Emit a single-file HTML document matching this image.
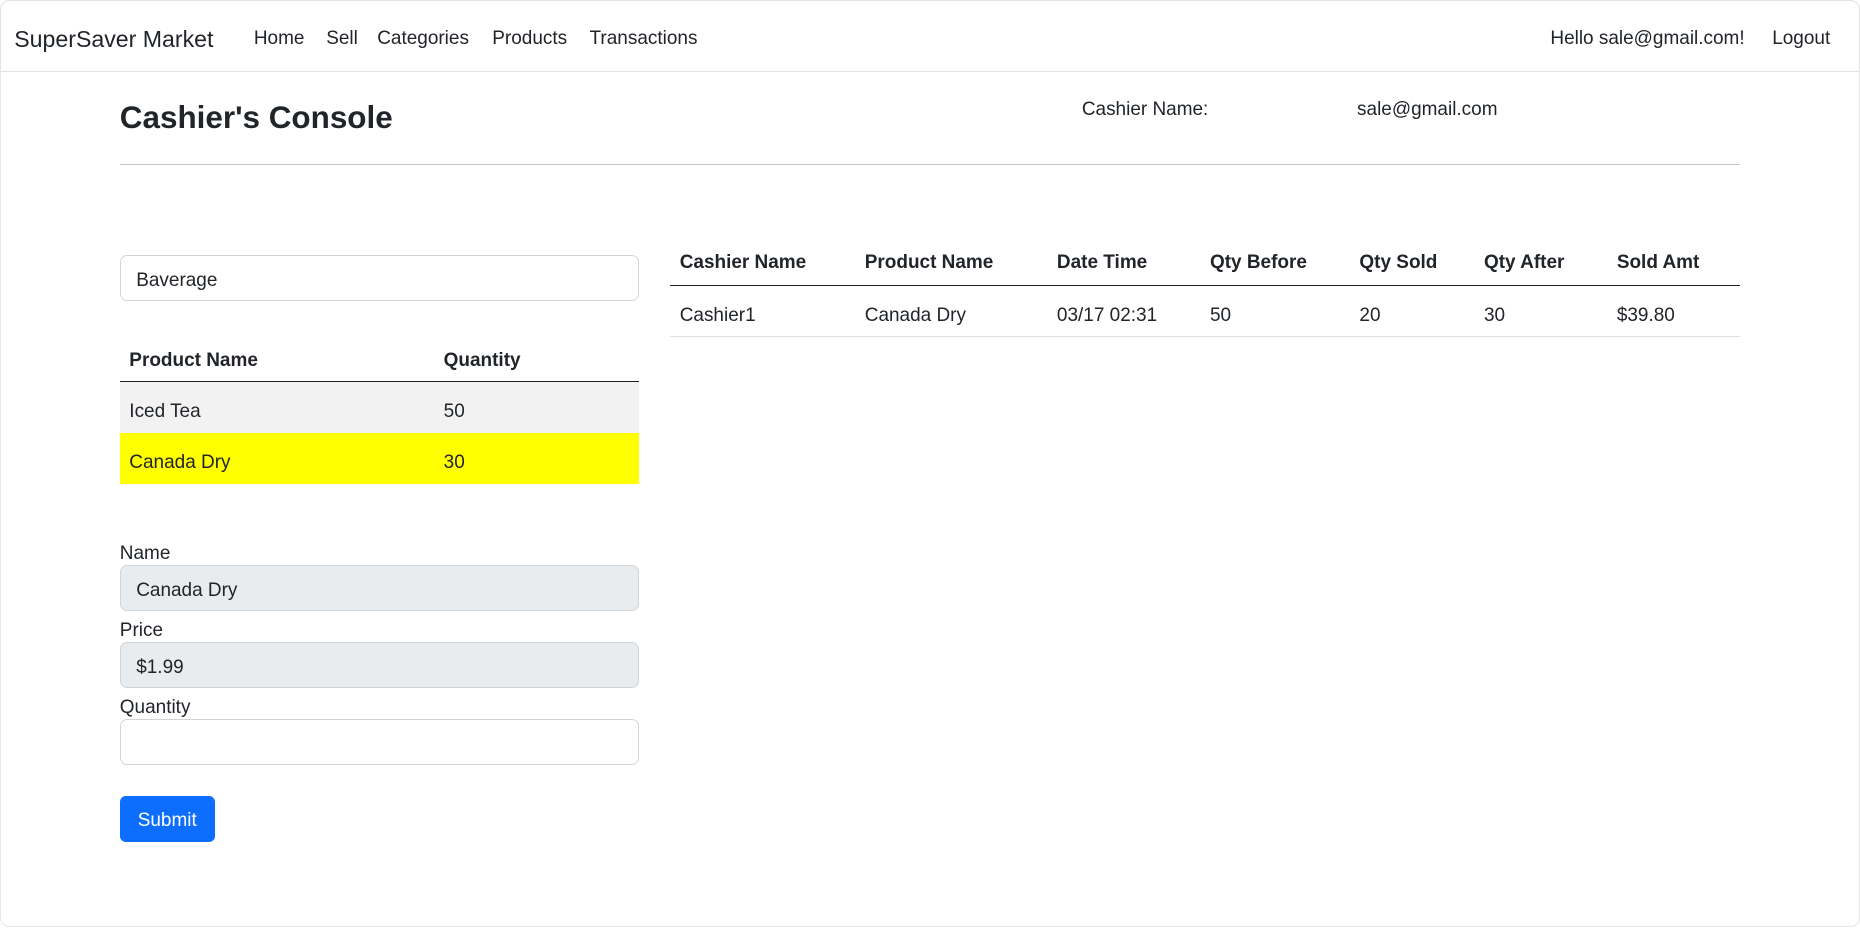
<!DOCTYPE html>
<html><head><meta charset="utf-8"><style>
html,body{margin:0;padding:0;background:#fff;}
body{width:1860px;height:928px;overflow:hidden;}
#z{zoom:1.18622;width:1568px;height:782px;position:relative;font-family:"Liberation Sans",sans-serif;font-size:16px;color:#212529;}
.a{position:absolute;white-space:nowrap;line-height:20px;margin-top:2px;}
.nav{position:absolute;left:0;top:0;width:1566px;height:59px;border:1px solid #e3e3e3;border-top-left-radius:8px;border-top-right-radius:8px;}
.inp{position:absolute;left:101px;width:436px;height:37px;border:1px solid #ced4da;border-radius:6px;box-sizing:content-box;}
.inp span{position:absolute;left:13px;top:11px;line-height:20px;}
.dis{background:#e9ecef;}
</style></head><body><div id="z">
<div style="position:absolute;left:0;top:0;width:1566px;height:780px;border:1px solid #e6e6e6;border-radius:8px;"></div>
<div class="nav"></div>
<div class="a" style="left:12px;top:19px;font-size:19.5px;line-height:24px;">SuperSaver Market</div>
<div class="a" style="left:214px;top:21px;">Home</div>
<div class="a" style="left:275px;top:21px;">Sell</div>
<div class="a" style="left:318px;top:21px;">Categories</div>
<div class="a" style="left:415px;top:21px;">Products</div>
<div class="a" style="left:497px;top:21px;">Transactions</div>
<div class="a" style="left:1307px;top:21px;">Hello sale@gmail.com!</div>
<div class="a" style="left:1494px;top:21px;">Logout</div>

<div class="a" style="left:101px;top:81px;font-size:26.5px;line-height:34px;font-weight:bold;">Cashier's Console</div>
<div class="a" style="left:912px;top:81px;">Cashier Name:</div>
<div class="a" style="left:1144px;top:81px;">sale@gmail.com</div>
<div style="position:absolute;left:101px;top:138px;width:1366px;height:1px;background:#c8c8c8;"></div>

<div class="inp" style="top:215px;"><span>Baverage</span></div>
<div class="a" style="left:109px;top:292px;font-weight:bold;">Product Name</div>
<div class="a" style="left:374px;top:292px;font-weight:bold;">Quantity</div>
<div style="position:absolute;left:101px;top:321px;width:438px;height:1px;background:#212529;"></div>
<div style="position:absolute;left:101px;top:322px;width:438px;height:43px;background:#f2f2f2;"></div>
<div style="position:absolute;left:101px;top:365px;width:438px;height:43px;background:#ffff00;"></div>
<div class="a" style="left:109px;top:335px;">Iced Tea</div>
<div class="a" style="left:374px;top:335px;">50</div>
<div class="a" style="left:109px;top:378px;">Canada Dry</div>
<div class="a" style="left:374px;top:378px;">30</div>

<div class="a" style="left:101px;top:455px;">Name</div>
<div class="inp dis" style="top:476px;"><span>Canada Dry</span></div>
<div class="a" style="left:101px;top:520px;">Price</div>
<div class="inp dis" style="top:541px;"><span>$1.99</span></div>
<div class="a" style="left:101px;top:585px;">Quantity</div>
<div class="inp" style="top:606px;"></div>
<div style="position:absolute;left:101px;top:671px;width:80px;height:39px;background:#0d6efd;border-radius:5px;color:#fff;text-align:center;line-height:42px;">Submit</div>

<div class="a" style="left:573px;top:210px;font-weight:bold;">Cashier Name</div>
<div class="a" style="left:729px;top:210px;font-weight:bold;">Product Name</div>
<div class="a" style="left:891px;top:210px;font-weight:bold;">Date Time</div>
<div class="a" style="left:1020px;top:210px;font-weight:bold;">Qty Before</div>
<div class="a" style="left:1146px;top:210px;font-weight:bold;">Qty Sold</div>
<div class="a" style="left:1251px;top:210px;font-weight:bold;">Qty After</div>
<div class="a" style="left:1363px;top:210px;font-weight:bold;">Sold Amt</div>
<div style="position:absolute;left:565px;top:240px;width:902px;height:1px;background:#212529;"></div>
<div class="a" style="left:573px;top:254px;">Cashier1</div>
<div class="a" style="left:729px;top:254px;">Canada Dry</div>
<div class="a" style="left:891px;top:254px;">03/17 02:31</div>
<div class="a" style="left:1020px;top:254px;">50</div>
<div class="a" style="left:1146px;top:254px;">20</div>
<div class="a" style="left:1251px;top:254px;">30</div>
<div class="a" style="left:1363px;top:254px;">$39.80</div>
<div style="position:absolute;left:565px;top:283px;width:902px;height:1px;background:#dee2e6;"></div>
</div></body></html>
